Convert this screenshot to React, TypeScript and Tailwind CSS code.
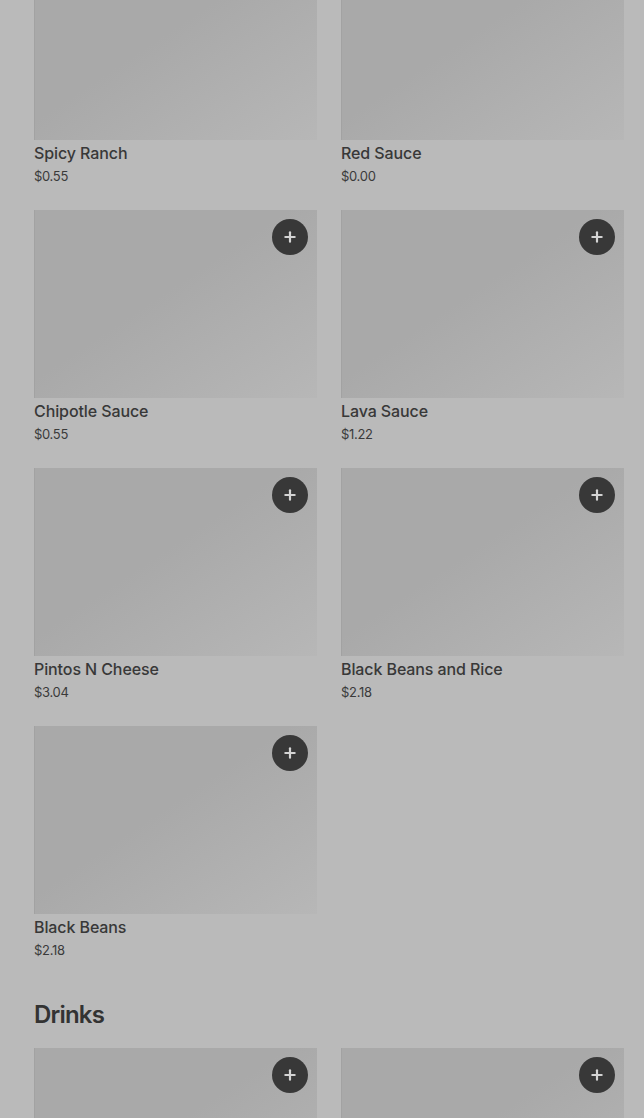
import React from "react";
import { Plus } from "lucide-react";

type Item = { name: string; price: string; button?: boolean };

const sides: Item[] = [
  { name: "Spicy Ranch", price: "$0.55" },
  { name: "Red Sauce", price: "$0.00" },
  { name: "Chipotle Sauce", price: "$0.55", button: true },
  { name: "Lava Sauce", price: "$1.22", button: true },
  { name: "Pintos N Cheese", price: "$3.04", button: true },
  { name: "Black Beans and Rice", price: "$2.18", button: true },
  { name: "Black Beans", price: "$2.18", button: true },
];

const drinks: Item[] = [
  { name: "", price: "", button: true },
  { name: "", price: "", button: true },
];

function Card({ item }: { item: Item }) {
  return (
    <div className="flex flex-col">
      <div className="relative h-[188px] border-l border-[#a2a2a2] bg-[linear-gradient(to_bottom_right,#a9a9a9_45%,#b7b7b7)]">
        {item.button && (
          <button className="absolute right-[9px] top-[9px] flex h-9 w-9 items-center justify-center rounded-full bg-[#383838]">
            <Plus size={16} strokeWidth={3.25} className="text-[#d4d4d4]" />
          </button>
        )}
      </div>
      {item.name && (
        <>
          <div className="pt-[3px] text-base font-medium leading-5 tracking-[-0.1px] text-[#383838]">
            {item.name}
          </div>
          <div className="mt-[3px] text-[13px] leading-5 tracking-[-0.3px] text-[#3a3a3a]">
            {item.price}
          </div>
        </>
      )}
    </div>
  );
}

export default function App() {
  return (
    <div
      className="h-[1118px] overflow-hidden bg-[#bababa] pl-[34px] pr-5"
      style={{ fontFamily: "Inter, 'Noto Sans', sans-serif" }}
    >
      <div className="-mt-12 grid grid-cols-2 gap-x-6 gap-y-6">
        {sides.map((item, i) => (
          <Card key={i} item={item} />
        ))}
      </div>
      <h2 className="mt-[39px] text-2xl font-semibold leading-8 tracking-[-0.8px] text-[#333333]">
        Drinks
      </h2>
      <div className="mt-[17px] grid grid-cols-2 gap-x-6 gap-y-6">
        {drinks.map((item, i) => (
          <Card key={i} item={item} />
        ))}
      </div>
    </div>
  );
}
